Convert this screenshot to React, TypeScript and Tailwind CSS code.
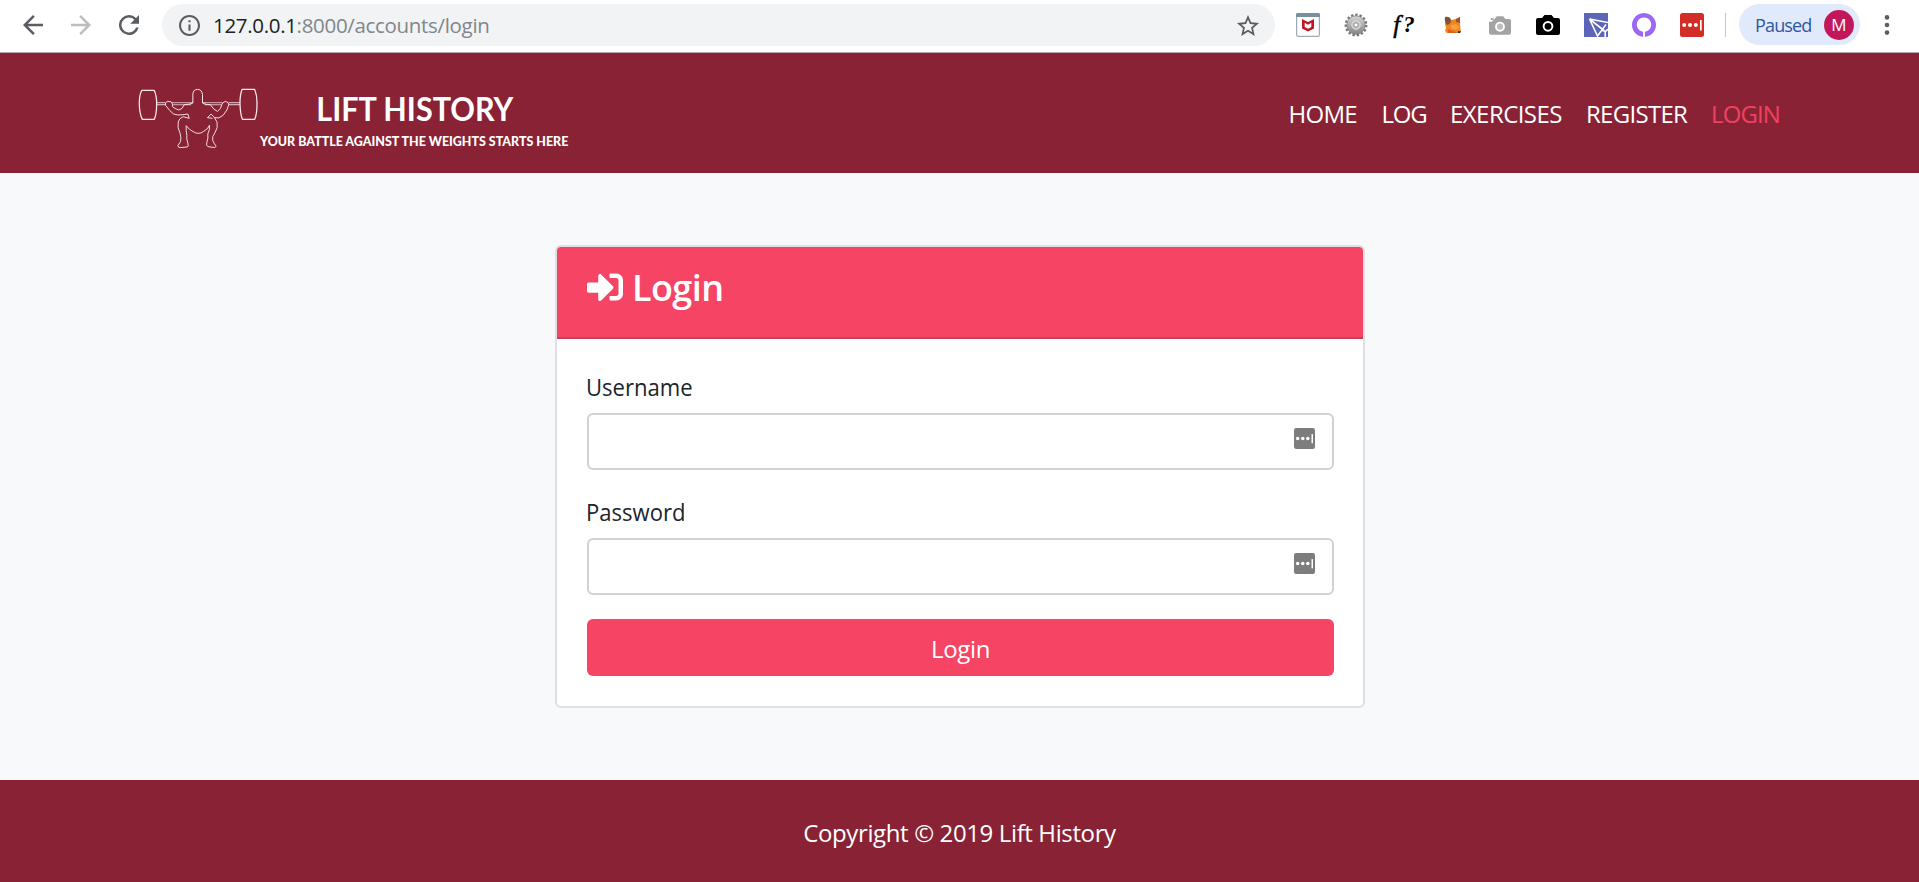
import type { ReactNode } from "react";
import { FaSignInAlt } from "react-icons/fa";

const navItems = [
  { label: "HOME", box: "w-[69px]", text: "tracking-[-0.7px]", color: "text-white" },
  { label: "LOG", box: "w-[44.5px]", text: "tracking-[-1.2px]", color: "text-white" },
  { label: "EXERCISES", box: "w-[112px]", text: "tracking-[-0.55px]", color: "text-white" },
  { label: "REGISTER", box: "w-[101px]", text: "tracking-[-0.7px]", color: "text-white" },
  { label: "LOGIN", box: "w-[67px]", text: "tracking-[-0.9px]", color: "text-[#ef4262]" },
];

function Lifter() {
  return (
    <svg viewBox="24 36 364 186" className="h-[62px] w-[121px] shrink-0" fill="none" stroke="#fbe9ec" strokeWidth="3.8" strokeLinejoin="round">
      <path d="M35 46H73Q81 63 80 90Q80 118 73 133H37Q29 118 28 90Q27 62 35 46Z" />
      <path d="M337 43H375Q383 62 382 88Q382 118 375 133H338Q332 118 331 90Q330 60 337 43Z" />
      <path d="M80 83H107M80 89H106M297 83H331M296 89H331" strokeWidth="2.6" />
      <path d="M126 83H189M130 89H184M218 83H278M224 89H275" strokeWidth="2.2" />
      <path d="M189 84V58Q190 43 203 43Q216 43 218 58V84" strokeWidth="3" />
      <path d="M189 84Q181 88 163 89Q158 103 147 105Q134 101 128 95Q130 86 123 80L112 79Q104 83 107 91Q120 109 131 117Q143 122 159 119L174 117L178 130L160 125Q148 129 145 141Q142 160 150 173Q155 189 152 200L144 212Q144 219 153 218L173 216Q177 213 174 205Q169 191 171 181Q168 168 169 152" strokeWidth="2.8" />
      <path d="M218 84Q227 89 242 89Q251 105 263 109Q275 101 276 89Q277 82 287 79Q297 80 297 89Q294 105 280 121Q266 133 254 128Q266 141 262 158Q257 172 249 185Q246 197 254 207Q263 216 254 218L234 215Q228 211 231 203Q236 189 234 177Q241 164 239 151" strokeWidth="2.8" />
      <path d="M169 152Q178 165 190 170Q206 181 222 169Q234 163 239 151M254 128L244 117L233 128L248 130" strokeWidth="2.8" />
    </svg>
  );
}

function PasswordKey({ className, rx }: { className: string; rx: number }) {
  return (
    <svg viewBox="0 0 24 24" className={className}>
      <rect width="24" height="24" rx={rx} fill="currentColor" />
      <circle cx="4.2" cy="12" r="2" fill="#fff" />
      <circle cx="10" cy="12" r="2" fill="#fff" />
      <circle cx="15.8" cy="12" r="2" fill="#fff" />
      <rect x="20" y="7" width="1.7" height="10.5" fill="#fff" />
    </svg>
  );
}

function Slot({ children }: { children: ReactNode }) {
  return <div className="flex h-6 w-6 shrink-0 items-center justify-center">{children}</div>;
}

function Camera({ color, notch }: { color: string; notch?: boolean }) {
  return (
    <svg viewBox="0 0 24 20" className={notch ? "mt-px h-[19px] w-[22px]" : "h-5 w-6"}>
      <path d="M2 3H6L8.5 0H15.5L18 3H22Q24 3 24 5V18Q24 20 22 20H2Q0 20 0 18V5Q0 3 2 3Z" fill={color} />
      <circle cx="12" cy="11.3" r="4.4" fill={notch ? "#bdbdbd" : color} stroke="#fff" strokeWidth="2" />
      {notch && <path d="M0 0H6V3L3 6H0Z" fill="#fff" />}
      {notch && <path d="M2 2H5V4H2Z" fill={color} />}
    </svg>
  );
}

function Extensions() {
  return (
    <div className="flex items-center gap-6">
      <Slot>
        <svg viewBox="0 0 24 24" className="h-6 w-6">
          <rect x=".6" y=".6" width="22.8" height="22.8" rx="1.5" fill="#fff" stroke="#9eabb5" strokeWidth="1.2" />
          <path d="M0 4V1.5Q0 0 1.5 0H22.5Q24 0 24 1.5V4Z" fill="#78909c" />
          <path d="M6 6L12 9L18 6V15.5L12 18.5L6 15.5ZM8.7 9.8V14L12 15.7L15.3 14V9.8L12 11.8Z" fill="#c01825" fillRule="evenodd" />
        </svg>
      </Slot>
      <Slot>
        <svg viewBox="0 0 24 24" className="h-6 w-6">
          <defs>
            <linearGradient id="gear" x1="0" y1="0" x2="0" y2="1">
              <stop offset="0" stopColor="#d6d6d6" />
              <stop offset="1" stopColor="#858585" />
            </linearGradient>
          </defs>
          <circle cx="12" cy="12" r="10.2" fill="none" stroke="#777" strokeWidth="2.4" strokeDasharray="2.4 1.87" />
          <circle cx="12" cy="12" r="9.2" fill="url(#gear)" stroke="#777" strokeWidth=".7" />
          <circle cx="12" cy="12" r="4.2" fill="#bbb" stroke="#e4e4e4" />
          <circle cx="12" cy="12" r="2" fill="#fff" stroke="#777" strokeWidth=".6" />
        </svg>
      </Slot>
      <Slot>
        <span className="flex items-center gap-[3px] font-['Liberation_Serif',serif] text-[25px] leading-6 text-black">
          <i className="[-webkit-text-stroke:0.5px_black]">f</i>
          <i className="text-[23px] font-bold">?</i>
        </span>
      </Slot>
      <Slot>
        <svg viewBox="0 0 17 18" className="h-[18px] w-[17px]">
          <path d="M1 1L7 4L12 3L16 1V9L17 16L14 17L3 17Q0 15 2 12L1 8Z" fill="#f08423" />
          <path d="M1 1Q6 0 7 4Q7 8 3 9Q0 5 1 1Z" fill="#805338" />
          <path d="M12 3L16 1V7L12 6Z" fill="#9c5429" />
          <path d="M7 9L12 8L15 11L12 14L7 12Z" fill="#f8a03c" />
          <path d="M4 13L9 15L14 17H4Z" fill="#d9611d" />
          <path d="M14 15L17 15.5L16 17H14Z" fill="#333" />
        </svg>
      </Slot>
      <Slot><Camera color="#a3a3a3" notch /></Slot>
      <Slot><Camera color="#000" /></Slot>
      <Slot>
        <svg viewBox="0 0 24 24" className="h-6 w-6">
          <rect width="24" height="24" fill="#5c65b8" />
          <path d="M5.5 6L24 9.5M5.5 6L13.5 23L22 11.5M5.5 6L20 17.5M17.5 17L21.5 18.5L24 16M21.2 18V24" fill="none" stroke="#fff" strokeWidth="1.6" />
        </svg>
      </Slot>
      <Slot>
        <svg viewBox="0 0 24 24" className="h-6 w-6">
          <path d="M11.2 24A12 12 0 1 1 12.8 24V18.8A7.2 7.2 0 1 0 11.2 18.8Z" fill="#9d67f5" />
          <path d="M11.2 18V24H12.8V18Z" fill="#fff" />
        </svg>
      </Slot>
      <Slot><PasswordKey className="h-6 w-6 text-[#d32d27]" rx={2.5} /></Slot>
    </div>
  );
}

function BrowserBar() {
  return (
    <div className="flex h-[53px] items-start border-b border-[#b5abae] bg-white">
      <div className="flex h-[49px] w-[162px] shrink-0 items-center gap-[29px] pl-[22.5px]">
        <svg viewBox="4 4 16 16" className="h-5 w-5" fill="#5a5d61">
          <path d="M20 11H7.83l5.59-5.59L12 4l-8 8 8 8 1.41-1.41L7.83 13H20v-2z" />
        </svg>
        <svg viewBox="4 4 16 16" className="-ml-px h-5 w-5" fill="#bcbdbf">
          <path d="M12 4l-1.41 1.41L16.17 11H4v2h12.17l-5.58 5.59L12 20l8-8z" />
        </svg>
        <svg viewBox="4 4 16 16" className="-ml-px h-5 w-5" fill="#5a5d61">
          <path d="M17.65 6.35A7.958 7.958 0 0 0 12 4a8 8 0 1 0 7.73 10h-2.08A6 6 0 1 1 12 6c1.66 0 3.14.69 4.22 1.78L13 11h7V4l-2.35 2.35z" />
        </svg>
      </div>
      <div className="mt-1 flex h-[42px] w-[1113px] shrink-0 items-center rounded-full bg-[#f1f3f4] pr-4 pl-[17px]">
        <svg viewBox="2 2 20 20" className="h-[21px] w-[21px]" fill="#5a5d61">
          <path d="M11 17h2v-6h-2v6zm1-15C6.48 2 2 6.48 2 12s4.48 10 10 10 10-4.48 10-10S17.52 2 12 2zm0 18c-4.41 0-8-3.59-8-8s3.59-8 8-8 8 3.59 8 8-3.59 8-8 8zM11 9h2V7h-2v2z" />
        </svg>
        <span className="ml-[13px] text-[20.5px] leading-7 tracking-[-0.32px] whitespace-nowrap text-[#202124]">
          127.0.0.1<span className="text-[#80868b]">:8000/accounts/login</span>
        </span>
        <svg viewBox="2 2 20 19" className="ml-auto h-[21px] w-[22px]" fill="#5a5d61">
          <path d="M22 9.24l-7.19-.62L12 2 9.19 8.63 2 9.24l5.46 4.73L5.82 21 12 17.27 18.18 21l-1.63-7.03L22 9.24zM12 15.4l-3.76 2.27 1-4.28-3.32-2.88 4.38-.38L12 6.1l1.71 4.04 4.38.38-3.32 2.88 1 4.28L12 15.4z" />
        </svg>
      </div>
      <div className="flex h-[50px] items-center pl-[21px]">
        <Extensions />
        <div className="ml-[21px] h-6 w-px bg-[#c4c6c9]" />
        <div className="mb-px ml-[13px] flex h-[41px] w-[121px] items-center justify-between rounded-full bg-[#e1eafa] pr-[6px] pl-[16px]">
          <span className="text-[18px] leading-6 tracking-[-0.85px] text-[#2d56a5]">Paused</span>
          <span className="flex h-[30px] w-[30px] items-center justify-center rounded-full bg-[#c2185b] text-[17px] text-white">M</span>
        </div>
        <svg viewBox="0 0 6 20" className="ml-[24px] h-5 w-[6px]" fill="#5a5d61">
          <circle cx="3" cy="2.4" r="2.3" />
          <circle cx="3" cy="10" r="2.3" />
          <circle cx="3" cy="17.6" r="2.3" />
        </svg>
      </div>
    </div>
  );
}

function Field({ label, name }: { label: string; name: string }) {
  return (
    <div className="mb-6">
      <label htmlFor={name} className="mb-2 -ml-px block w-fit origin-left scale-x-[0.92] text-[24px] leading-9 text-[#212529]">{label}</label>
      <div className="flex h-[57px] items-center rounded-[6px] border-2 border-[#ced1d5] bg-white pr-[17px] pb-[6px]">
        <input id={name} type={name === "password" ? "password" : "text"} className="min-w-0 flex-1 bg-transparent px-4 outline-none" />
        <PasswordKey className="h-[21px] w-[21px] text-[#7d7d7d]" rx={2.5} />
      </div>
    </div>
  );
}

export default function App() {
  return (
    <div className="flex h-[882px] w-[1919px] flex-col overflow-hidden bg-[#f7f9fb] font-['Open_Sans','Noto_Sans',sans-serif]">
      <BrowserBar />
      <header className="flex h-[120px] shrink-0 items-start justify-between bg-[#8a2235] pr-[141px] pl-[138px]">
        <div className="flex pt-[34px]">
          <Lifter />
          <div className="ml-[2px] flex w-[307px] flex-col items-center font-['Lato',sans-serif] whitespace-nowrap text-white">
            <div className="mt-[2px] scale-x-[0.94] text-[32.5px] leading-10 font-bold">LIFT HISTORY</div>
            <div className="mt-[2px] scale-x-[0.89] text-[14px] leading-5 font-black">YOUR BATTLE AGAINST THE WEIGHTS STARTS HERE</div>
          </div>
        </div>
        <nav className="flex gap-6 pt-[43px] text-[24px] leading-9 whitespace-nowrap">
          {navItems.map((item) => (
            <a key={item.label} href="#" className={`block ${item.box} ${item.text} ${item.color}`}>{item.label}</a>
          ))}
        </nav>
      </header>
      <main className="flex h-[607px] shrink-0 items-start pt-[72px] pl-[555px]">
        <section className="h-[463px] w-[810px] overflow-hidden rounded-[6px] border-2 border-[#dddfe2] bg-white">
          <div className="flex h-[92px] items-start border-b-2 border-[#c73f59] bg-[#f64465] pt-[17px] pl-[29px] text-white">
            <FaSignInAlt className="mt-[5px] h-9 w-[38px]" />
            <h1 className="ml-[8px] text-[36px] leading-[48px] font-semibold tracking-[-0.6px]">Login</h1>
          </div>
          <form className="pt-[30px] pr-[29px] pl-[30px]">
            <Field label="Username" name="username" />
            <Field label="Password" name="password" />
            <button type="button" className="h-[57px] w-full rounded-[6px] bg-[#f64465] pt-[3px] text-[24px] tracking-[-0.35px] text-white">Login</button>
          </form>
        </section>
      </main>
      <footer className="flex h-[102px] shrink-0 items-center justify-center bg-[#8a2235] pt-[4px] text-[24px] leading-9 tracking-[-0.38px] text-white">
        Copyright © 2019 Lift History
      </footer>
    </div>
  );
}
